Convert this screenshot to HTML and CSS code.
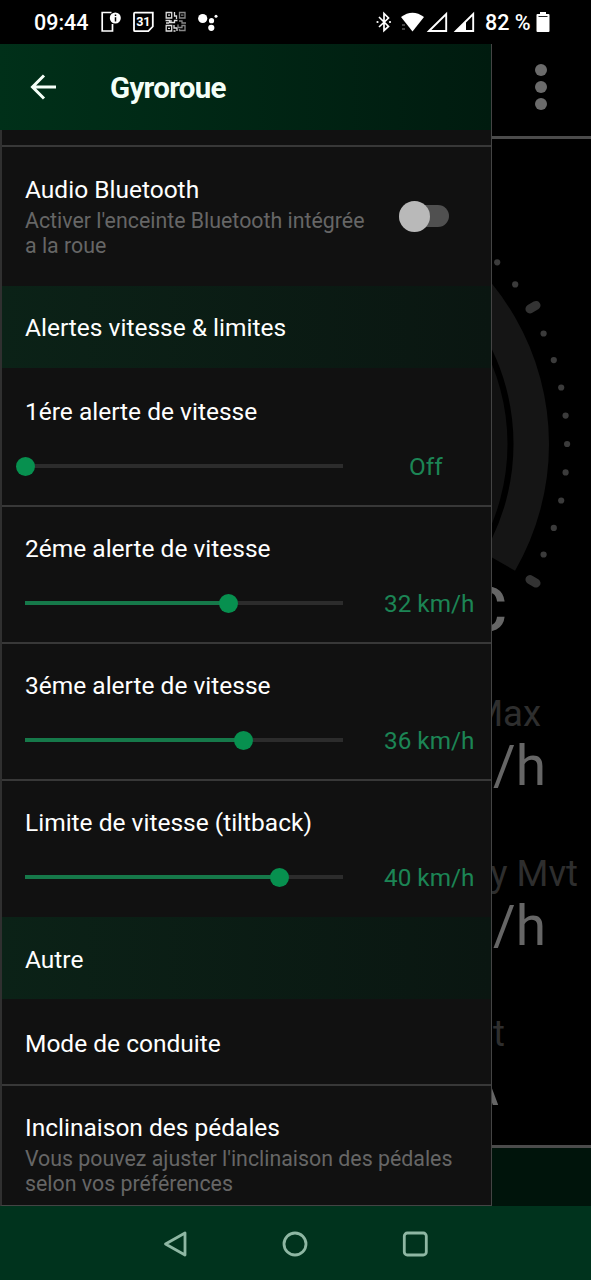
FILE: index.html
```html
<!DOCTYPE html>
<html lang="fr">
<head>
<meta charset="utf-8">
<title>Gyroroue</title>
<link rel="stylesheet" href="styles.css">
</head>
<body>
<div class="screen">
  <div class="status">
    <span class="clock">09:44</span>
    <svg class="status-left" width="130" height="36" viewBox="95 4 130 36">
      <path d="M111.500 12.500H102.200V31H112.500V24" fill="none" stroke="#fff" stroke-width="1.700"/>
      <circle cx="115.300" cy="18" r="5.500" fill="#fff"/>
      <path d="M115.500 14.500v1.500M115.500 17.300v4.200" stroke="#000" stroke-width="1.500"/>
      <path d="M135 12.700H152.800V26.500L148.300 31.200H135Q134 31.200 134 30.200V13.700Q134 12.700 135 12.700Z" fill="none" stroke="#fff" stroke-width="1.800"/>
      <text x="143.300" y="26.300" text-anchor="middle" class="cal">31</text>
      <g fill="none" stroke="#ddd" stroke-width="1.300">
        <path d="M166.200 12.500h5.500v5.500h-5.500zM166.200 25.500h5.500v5.500h-5.500z"/>
        <path d="M179.500 12.500h5.500v5.500h-5.500z" stroke="#888"/>
        <path d="M168 15.200h2M168 28.300h2M174.500 12v4h2v3M165.500 20.500h4v2h5v-2h3M166 23h3M174 25v3h3v3M173.500 31h2M171 20v3" />
        <path d="M181 15.200h2.500M179 21h3v2h4M178 24.500v3h4v-2h3v5h-6M179.500 31v-2" stroke="#888"/>
      </g>
      <g fill="#fff"><circle cx="202.700" cy="18.500" r="4.600"/><circle cx="211.500" cy="20.700" r="2.600"/><circle cx="211.300" cy="27.800" r="3.100"/><circle cx="216" cy="16.300" r="1.500"/></g>
    </svg>
    <svg class="status-right" width="110" height="36" viewBox="370 4 110 36">
      <path d="M379 17l9.500 9.500L384 30.500V13.500l4.500 4.500L379 27" fill="none" stroke="#fff" stroke-width="1.700"/>
      <circle cx="377.500" cy="22" r="1.100" fill="#fff"/><circle cx="390" cy="22" r="1.100" fill="#fff"/>
      <path d="M401 17Q412.500 8.500 424 17L412.500 31.500Z" fill="#fff"/>
      <path d="M402 25h3M402 29h3" stroke="#444" stroke-width="2"/>
      <path d="M429 31L446.200 14V31Z" fill="none" stroke="#fff" stroke-width="1.900"/>
      <path d="M456 31L473.200 14V31Z" fill="none" stroke="#fff" stroke-width="1.900"/>
      <path d="M456 31L466 21V31Z" fill="#fff"/>
    </svg>
    <span class="percent">82 %</span>
    <svg class="battery" width="14" height="20" viewBox="0 0 14 20"><path d="M1.500 2H4V0H10V2H12.500Q13.500 2 13.500 3V19Q13.500 20 12.500 20H1.500Q.5 20 .5 19V3Q.5 2 1.500 2Z" fill="#fff"/><path d="M2.500 4.500h9" stroke="#222"/></svg>
  </div>

  <div class="main">
    <div class="drawer">
      <div class="toolbar">
        <svg width="28" height="28" viewBox="0 0 28 28"><path d="M27 14H4M15 2.500L3.500 14L15 25.500" fill="none" stroke="#f4fff8" stroke-width="3"/></svg>
        <h1 class="title">Gyroroue</h1>
      </div>
      <div class="list">
        <div class="stub"></div>
        <div class="item audio">
          <div class="texts">
            <div class="name">Audio Bluetooth</div>
            <div class="desc">Activer l'enceinte Bluetooth intégrée<br>a la roue</div>
          </div>
          <div class="switch"><div class="knob"></div></div>
        </div>
        <div class="section"><span class="name">Alertes vitesse &amp; limites</span></div>
        <div class="item speed first"><div class="name">1ére alerte de vitesse</div>
          <div class="control"><div class="track"><div class="fill" style="width:0%"></div><div class="thumb"></div></div><div class="value off">Off</div></div></div>
        <div class="item speed"><div class="name">2éme alerte de vitesse</div>
          <div class="control"><div class="track"><div class="fill" style="width:64%"></div><div class="thumb"></div></div><div class="value">32 km/h</div></div></div>
        <div class="item speed"><div class="name">3éme alerte de vitesse</div>
          <div class="control"><div class="track"><div class="fill" style="width:68.700%"></div><div class="thumb"></div></div><div class="value">36 km/h</div></div></div>
        <div class="item speed last"><div class="name">Limite de vitesse (tiltback)</div>
          <div class="control"><div class="track"><div class="fill" style="width:80%"></div><div class="thumb"></div></div><div class="value">40 km/h</div></div></div>
        <div class="section second"><span class="name">Autre</span></div>
        <div class="item mode"><div class="name">Mode de conduite</div></div>
        <div class="item pedals">
          <div class="name">Inclinaison des pédales</div>
          <div class="desc">Vous pouvez ajuster l'inclinaison des pédales<br>selon vos préférences</div>
        </div>
      </div>
    </div>

    <div class="behind">
      <div class="more"><i></i><i></i><i></i></div>
      <svg class="gauge" width="99" height="456" viewBox="492 139 99 456">
        <path d="M515.040 570.750A253.500 253.500 0 0 0 295.500 190.500V226A218 218 0 0 1 484.300 553Z" fill="#151515"/>
        <path d="M479.100 550A212 212 0 0 0 295.500 232V444Z" fill="#111"/>
        <g fill="#3b3b3b">
          <circle cx="497.200" cy="262.300" r="3.100"/><circle cx="515.200" cy="284.400" r="3.100"/>
          <circle cx="543.600" cy="333.500" r="3.100"/><circle cx="553.800" cy="360.100" r="3.100"/><circle cx="561.200" cy="387.500" r="3.100"/><circle cx="565.600" cy="415.600" r="3.100"/><circle cx="567.100" cy="444" r="3.100"/>
          <circle cx="565.600" cy="472.400" r="3.100"/><circle cx="561.200" cy="500.500" r="3.100"/><circle cx="553.800" cy="527.900" r="3.100"/><circle cx="543.600" cy="554.500" r="3.100"/>
        </g>
        <path d="M530 308.900L536 305.400M530 579.600L536 583.100" stroke="#333" stroke-width="9" stroke-linecap="round"/>
      </svg>
      <div class="temp">C</div>
      <div class="label l1">Max</div>
      <div class="unit">/h</div>
      <div class="label l2">y Mvt</div>
      <div class="unit">/h</div>
      <div class="label l3">t</div>
      <div class="unit amp">A</div>
      <div class="tabs"></div>
    </div>
  </div>

  <div class="nav">
    <svg width="28" height="28" viewBox="0 0 28 28"><path d="M4.500 14L24 3V25Z"/></svg>
    <svg width="28" height="28" viewBox="0 0 28 28"><circle cx="14" cy="14" r="11"/></svg>
    <svg width="28" height="28" viewBox="0 0 28 28"><rect x="3.300" y="3" width="22" height="22" rx="3"/></svg>
  </div>
</div>
</body>
</html>
```
FILE: styles.css
```css
* { box-sizing: border-box; }
body { margin: 0; background: #000; font-family: Roboto, sans-serif; }
.screen { width: 591px; height: 1280px; display: flex; flex-direction: column; overflow: hidden; background: #000; }

.status { height: 44px; display: flex; align-items: center; color: #fff; font-size: 21.500px; font-weight: 500; white-space: nowrap; }
.clock { width: 61px; margin-left: 34px; }
.status-left { flex: none; }
.status-right { flex: none; margin-left: 145px; }
.percent { margin-left: 5px; width: 47px; }
.battery { flex: none; margin-left: 4px; }
.cal { font: 700 12.500px Roboto, sans-serif; fill: #fff; }

.main { height: 1162px; display: grid; grid-template-columns: 492px 99px; }
.drawer { background: #111; border-right: 1px solid #444; display: flex; flex-direction: column; min-width: 0; }
.toolbar { height: 86px; display: flex; align-items: center; padding-left: 29px; gap: 53px; background: linear-gradient(90deg, #003019, #001b0f); }
.title { margin: 0; font-size: 29.500px; line-height: 34px; font-weight: 700; letter-spacing: -0.700px; color: #f4fff8; padding-top: 2px; }
.list { height: 1076px; border-left: 2px solid #303030; border-bottom: 1px solid #444; display: flex; flex-direction: column; }
.stub { height: 17px; flex: none; border-bottom: 2px solid #383838; }
.item { flex: none; padding-left: 23px; border-bottom: 2px solid #383838; }
.name { font-size: 24.500px; line-height: 30px; color: #fff; white-space: nowrap; }
.desc { font-size: 21.350px; line-height: 25px; color: #666; white-space: nowrap; padding-top: 3px; }
.audio { height: 139px; padding-top: 28px; display: flex; border: 0; }
.texts { width: 372px; }
.switch { width: 50px; height: 22px; margin: 30px 0 0 2px; border-radius: 11px; background: #505050; display: flex; align-items: center; }
.knob { width: 31px; height: 31px; flex: none; border-radius: 50%; background: #b9b9b9; }
.section { flex: none; height: 82px; display: flex; align-items: center; padding: 2px 0 0 23px; background: linear-gradient(90deg, #0b2217, #0a1611); }
.section.second { padding-top: 3px; }
.speed { height: 137px; padding-top: 28px; }
.speed.first { height: 139px; padding-top: 29px; }
.speed.last { height: 136px; border: 0; }
.speed:not(.first) .name { margin-top: -1px; }
.control { display: flex; align-items: center; height: 30px; margin-top: 24px; }
.track { width: 318px; height: 4px; background: #2c2c2c; display: flex; align-items: center; }
.fill { height: 4px; background: #16794a; flex: none; }
.thumb { width: 19px; height: 19px; margin-left: -9.500px; border-radius: 50%; background: #07904f; flex: none; }
.value { margin-left: 41px; color: #1c8555; font-size: 24.300px; line-height: 30px; white-space: nowrap; padding-top: 2px; }
.value.off { margin-left: 66px; }
.mode { height: 87px; padding-top: 30px; }
.pedals { flex: 1; padding-top: 27px; border: 0; }

.behind { overflow: hidden; display: flex; flex-direction: column; background: #000; }
.more { flex: none; height: 95px; padding: 20px 1px 0 0; border-bottom: 3px solid #4b4b4b; display: flex; flex-direction: column; align-items: center; gap: 5px; }
.more i { flex: none; width: 12px; height: 12px; border-radius: 50%; background: #6b6b6b; }
.gauge { flex: none; }
.temp, .label, .unit { flex: none; align-self: flex-end; white-space: nowrap; }
.temp { font-size: 62px; font-weight: 500; line-height: 62px; height: 62px; margin: -16px 84px 0 0; color: #666; }
.label { font-size: 36.500px; line-height: 44px; color: #2e2e2e; }
.unit { font-size: 55px; line-height: 60px; color: #666; margin-right: 45px; }
.l1 { margin: 51px 50px 0 0; }
.l2 { margin: 56px 13px 0 0; }
.l3 { margin: 56px 86px 0 0; }
.amp { margin-right: 92px; }
.tabs { margin-top: auto; flex: none; height: 61px; border-top: 3px solid #4b4b4b; background: #00140b; }

.nav { height: 74px; background: #00331d; display: flex; justify-content: center; align-items: center; gap: 92px; padding: 1px 1.500px 0 0; }
.nav svg { fill: none; stroke: #8eb7a3; stroke-width: 2.800; stroke-linejoin: round; }
```
